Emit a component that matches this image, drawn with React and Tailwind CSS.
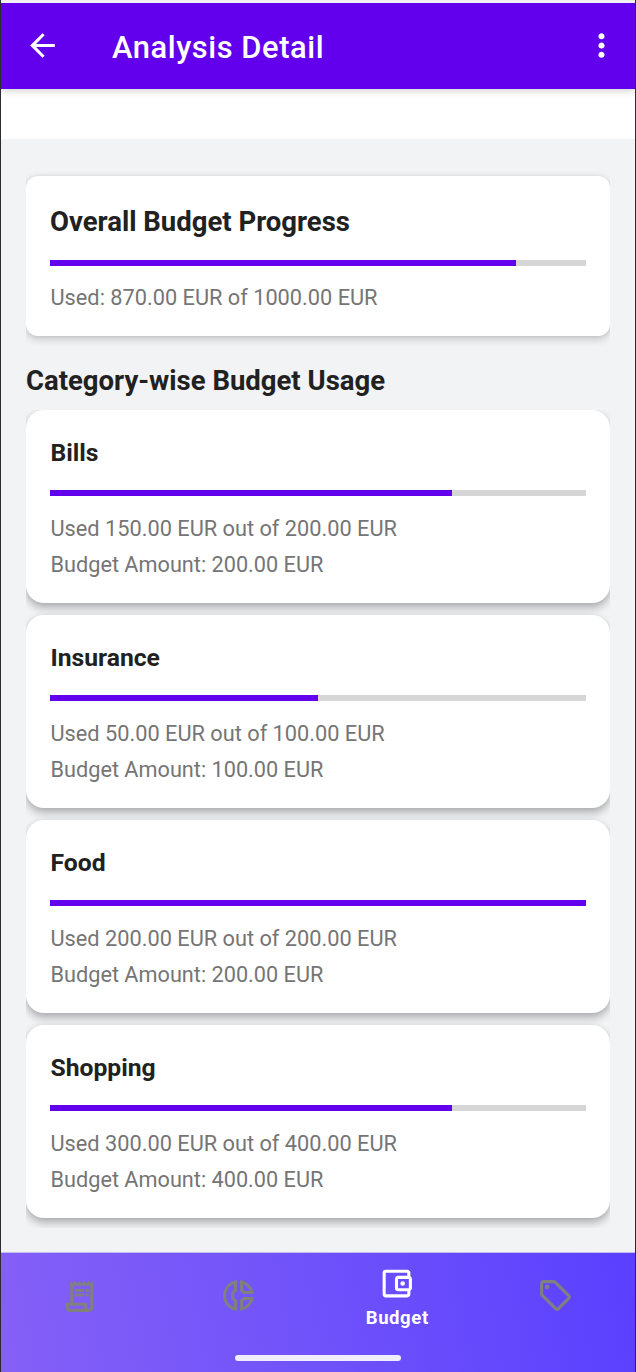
import React from "react";
import {
  MdArrowBack,
  MdMoreVert,
  MdOutlineReceiptLong,
  MdOutlineDonutSmall,
  MdOutlineAccountBalanceWallet,
} from "react-icons/md";

const categories = [
  { name: "Bills", used: 150, budget: 200 },
  { name: "Insurance", used: 50, budget: 100 },
  { name: "Food", used: 200, budget: 200 },
  { name: "Shopping", used: 300, budget: 400 },
];

const eur = (value) => `${value.toFixed(2)} EUR`;

function TagIcon({ className }) {
  return (
    <svg viewBox="0 0 24 24" fill="currentColor" className={className}>
      <path d="M21.41 11.58l-9-9C12.05 2.22 11.55 2 11 2H4c-1.1 0-2 .9-2 2v7c0 .55.22 1.05.59 1.42l9 9c.36.36.86.58 1.41.58s1.05-.22 1.41-.59l7-7c.37-.36.59-.86.59-1.41s-.23-1.06-.59-1.42zM13 20.01L4 11V4h7v-.01l9 9-7 7.02z" />
      <circle cx="6.5" cy="6.5" r="1.5" />
    </svg>
  );
}

function Progress({ used, total }) {
  return (
    <div className="h-1.5 bg-[#d6d6d6]">
      <div className="h-full bg-[#6200ee]" style={{ width: `${(used / total) * 100}%` }} />
    </div>
  );
}

function CategoryCard({ name, used, budget }) {
  return (
    <article className="h-[193px] shrink-0 rounded-[18px] bg-white px-6 pt-6 shadow-[0_5px_9px_rgba(0,0,0,0.27),0_0_5px_rgba(0,0,0,0.06)]">
      <h3 className="mb-[19px] pl-[0.5px] text-[24.7px] leading-[37px] font-bold text-[#212121]">{name}</h3>
      <Progress used={used} total={budget} />
      <p className="mt-[14px] pl-[0.5px] text-[21.75px] leading-[37px] text-[#757575]">
        Used {eur(used)} out of {eur(budget)}
      </p>
      <p className="-mt-px pl-[0.5px] text-[21.7px] leading-[37px] text-[#757575]">Budget Amount: {eur(budget)}</p>
    </article>
  );
}

export default function App() {
  return (
    <div className="flex h-[1372px] w-[636px] flex-col overflow-hidden border-x border-[#2b2b30] bg-[#f2f3f5] font-[Roboto,sans-serif]">
      <div className="z-20 h-[3px] shrink-0 bg-[#f1f1f3]" />
      <header className="z-10 flex h-[86px] shrink-0 items-center bg-[#6200ee] pr-[15px] pl-[23px] text-white shadow-[0_1px_8px_rgba(0,0,0,0.22)]">
        <MdArrowBack className="mb-[0.4px] size-[37px]" />
        <h1 className="ml-[51px] grow pt-[3px] text-[30.9px] leading-[40px] font-medium tracking-[0.55px]">Analysis Detail</h1>
        <MdMoreVert className="mb-[0.4px] size-[37px]" />
      </header>
      <div className="h-[50px] shrink-0 bg-white" />

      <main className="flex grow flex-col px-[25px] pt-[37px]">
        <div className="overflow-x-clip">
          <section className="h-[160px] rounded-xl bg-white px-6 pt-[26px] shadow-[0_3px_8px_rgba(0,0,0,0.2),0_0_4px_rgba(0,0,0,0.06)]">
            <h2 className="mb-[18px] text-[27.5px] leading-[40px] font-bold text-[#212121]">Overall Budget Progress</h2>
            <Progress used={870} total={1000} />
            <p className="mt-[13px] pl-[0.5px] text-[21.75px] leading-[37px] text-[#757575]">Used: 870.00 EUR of 1000.00 EUR</p>
          </section>
        </div>
        <h2 className="mt-[25px] mb-[9px] text-[27.5px] leading-[40px] font-bold text-[#212121]">Category-wise Budget Usage</h2>
        <section className="flex flex-col gap-3 overflow-hidden pb-[10px]">
          {categories.map((category) => (
            <CategoryCard key={category.name} {...category} />
          ))}
        </section>
      </main>

      <div className="h-px shrink-0 bg-[#c3bdef]" />
      <nav className="flex h-[119px] shrink-0 flex-col justify-between bg-[linear-gradient(80deg,#8560f7_0%,#6f52fa_50%,#5a40ff_100%)]">
        <div className="grid h-[86px] grid-cols-4 text-[#808080]">
          <div className="flex items-center justify-center pr-[1.5px]">
            <MdOutlineReceiptLong className="size-[37px]" />
          </div>
          <div className="flex items-center justify-center pb-px">
            <MdOutlineDonutSmall className="size-[37px]" />
          </div>
          <div className="flex flex-col items-center pt-3 text-white">
            <MdOutlineAccountBalanceWallet className="mr-px size-[37px]" />
            <span className="mt-1 text-[18.5px] leading-[25px] font-bold tracking-[0.6px]">Budget</span>
          </div>
          <div className="flex items-center justify-center pb-px">
            <TagIcon className="size-[37px]" />
          </div>
        </div>
        <div className="mb-[11px] h-1.5 w-[166px] self-center rounded-full bg-[#f0edff]" />
      </nav>
    </div>
  );
}
